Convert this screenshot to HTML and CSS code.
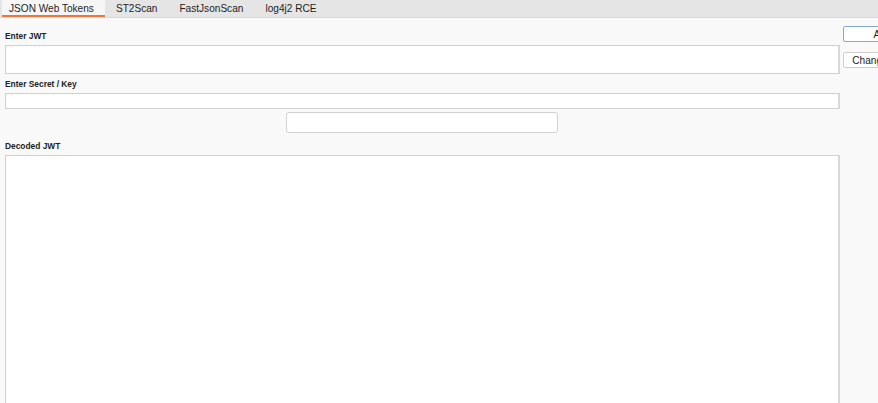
FILE: index.html
```html
<!DOCTYPE html>
<html lang="en">
  <head>
    <meta charset="UTF-8" />
    <meta name="viewport" content="width=device-width, initial-scale=1.0" />
    <title>JWT Tools</title>
    <link rel="stylesheet" href="styles.css">
  </head>
  <body>
    <div class="tabs">
      <div class="tab active">JSON Web Tokens</div>
      <div class="tab">ST2Scan</div>
      <div class="tab">FastJsonScan</div>
      <div class="tab">log4j2 RCE</div>
    </div>

    <div class="main">
      <div class="left">
        <div class="label first">Enter JWT</div>
        <input type="text" class="field jwt" />

        <div class="label">Enter Secret / Key</div>
        <input type="text" class="field secret" />

        <div class="center-row">
          <button class="wide-btn"></button>
        </div>

        <div class="label">Decoded JWT</div>
        <textarea class="decoded"></textarea>
      </div>

      <div class="right">
        <button class="side-btn focused">Apply</button>
        <button class="side-btn">Change Secret</button>
      </div>
    </div>
  </body>
</html>
```

FILE: styles.css
```css
html, body {
  margin: 0;
  height: 100%;
  overflow: hidden;
}

body {
  font-family: "Liberation Sans", Arial, sans-serif;
  background: #f9f9f9;
  color: #222;
}

.tabs {
  display: flex;
  height: 18px;
  background: #e5e5e5;
  border-bottom: 1px solid #dadada;
  box-sizing: border-box;
}

.tab {
  font-size: 10.1px;
  line-height: 18px;
  padding: 0 11px;
  color: #1e1e1e;
}

.tab.active {
  margin-left: 2px;
  padding-left: 7px;
  background: #f6f6f6;
  border-bottom: 2px solid #e8763d;
  line-height: 17px;
  height: 15px;
}

.main {
  display: flex;
}

.left {
  flex: 0 0 840px;
  padding-left: 5px;
  box-sizing: border-box;
  display: flex;
  flex-direction: column;
}

.label {
  font-size: 8.4px;
  font-weight: bold;
  line-height: 12px;
  height: 12px;
  margin-top: 4px;
  margin-bottom: 3px;
}

.label.first {
  margin-top: 12px;
}

.field {
  display: block;
  margin: 0;
  padding: 0 3px;
  background: #fff;
  border: 1px solid #cfcfcf;
  border-right: 2px solid #d8d8d8;
  box-sizing: border-box;
  width: 100%;
  outline: none;
}

.jwt {
  height: 29px;
}

.secret {
  height: 16px;
}

.center-row {
  display: flex;
  justify-content: center;
  margin-top: 3px;
  margin-bottom: 3px;
}

.wide-btn {
  width: 272px;
  height: 21px;
  background: #fff;
  border: 1px solid #d2d2d2;
  border-radius: 3px;
  margin-right: 1px;
}

.decoded {
  display: block;
  margin: 0;
  width: 100%;
  height: 260px;
  background: #fff;
  border: 1px solid #cfcfcf;
  border-right: 2px solid #d8d8d8;
  box-sizing: border-box;
  resize: none;
  outline: none;
}

.right {
  flex: 0 0 auto;
  display: flex;
  flex-direction: column;
  padding-left: 3px;
  padding-top: 8px;
  gap: 10px;
}

.side-btn {
  font-family: "Liberation Sans", Arial, sans-serif;
  font-size: 10.1px;
  width: 86px;
  height: 16px;
  padding: 0;
  background: #fff;
  color: #222;
  border: 1px solid #cfcfcf;
  border-radius: 2px;
  text-align: center;
}

.side-btn.focused {
  border-color: #86a8d4;
}
```
